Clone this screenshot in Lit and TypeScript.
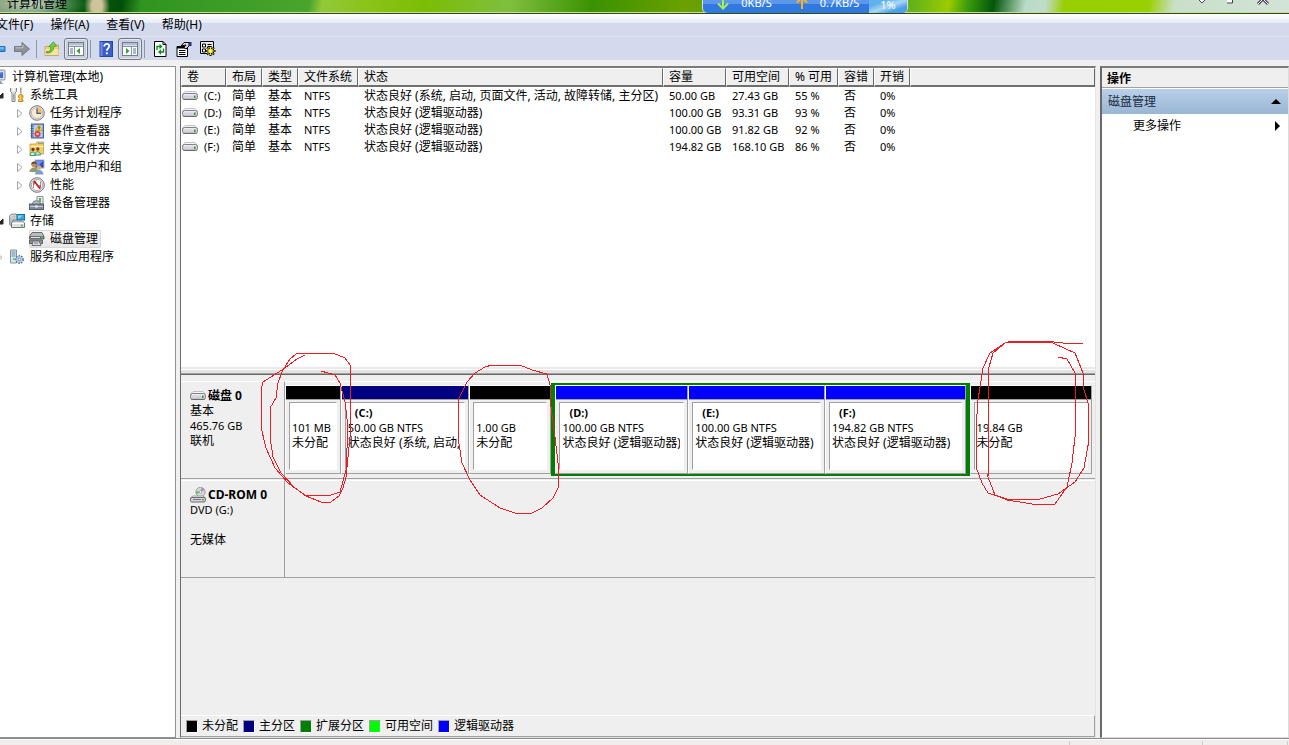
import { LitElement, html, css, svg, nothing, TemplateResult } from "lit";
import { customElement, property } from "lit/decorators.js";
import { classMap } from "lit/directives/class-map.js";
import { styleMap } from "lit/directives/style-map.js";

const uiFont = css`"Noto Sans", "Noto Sans CJK SC", sans-serif`;

/* ---------- icons, all on a 16 x 16 grid ---------- */
const glyphs: Record<string, TemplateResult> = {
  computer: svg`<rect x="1" y="1" width="13" height="10" rx="1" fill="#d9dde3" stroke="#8a93a3"/><rect x="3" y="3" width="9" height="6" fill="#3f6fd8"/><path d="M3 3h9l-9 5z" fill="#7fa5f0"/><path d="M5 12h5l2 3H4z" fill="#9aa2ae"/>`,
  tools: svg`<path d="M1.500 1v3.500L3 6v8.500h3V6l1.500-1.500V1" fill="#e4e4e4" stroke="#858585"/><path d="M4.500 0v4" stroke="#fff" stroke-width="1.600"/><path d="M4.500 7v6" stroke="#a5a5a5"/><path d="M11 .5h1.500v6H11z" fill="#999"/><path d="M9.500 9c0-2 4.500-2 4.500 0v1.500l-1 1 1 1.500v1.500H9.500V13l1-1.500-1-1z" fill="#f2b01e" stroke="#b87a08" stroke-width=".8"/><path d="M11.200 8.500v5.500" stroke="#ffe08a"/>`,
  clock: svg`<circle cx="8" cy="8" r="7.300" fill="#e2e2e2" stroke="#7b7b7b"/><circle cx="8" cy="8" r="5.600" fill="#f7ead0" stroke="#a9a9a9" stroke-width=".7"/><path d="M8 8V2.400A5.600 5.600 0 0 1 13.600 8z" fill="#f3bf6c"/><path d="M8 3.500V8.300H12" fill="none" stroke="#3b5c8c" stroke-width="1.300"/>`,
  events: svg`<rect x="2.500" y="1" width="12" height="14" fill="#7e9fd8" stroke="#44609c"/><rect x="4.500" y="2" width="9" height="12" fill="#b7cdf2"/><path d="M1.500 3h3M1.500 5.500h3M1.500 8h3M1.500 10.500h3M1.500 13h3" stroke="#56637e"/><path d="M10 1.500l3.500 6h-7z" fill="#ffd83a" stroke="#b98d00" stroke-width=".6"/><path d="M10 3.500v2.300M10 6.300v.8" stroke="#222"/><circle cx="8.500" cy="11" r="3" fill="#d93a30"/><path d="M7.300 9.800l2.400 2.400m0-2.400l-2.400 2.400" stroke="#fff"/>`,
  share: svg`<path d="M1 3h6l1-2h6.500v12H1z" fill="#f5cf6a" stroke="#c39a32" stroke-width=".8"/><path d="M9 2.500h5" stroke="#5aa8e0" stroke-width="1.200"/><path d="M1.500 5.500h13" stroke="#fff2bf"/><circle cx="4" cy="8.500" r="1.700" fill="#6b3a18"/><circle cx="8.800" cy="8" r="1.700" fill="#8c3a18"/><path d="M1 14.500c0-4.500 5.500-4.500 5.500 0z" fill="#d9e8df" stroke="#2f9a72"/><path d="M6 14c0-4.500 5.500-4.500 5.500 0z" fill="#bfe0d0" stroke="#2f9a72"/>`,
  users: svg`<rect x="6" y="1" width="9" height="8" fill="#2c4fc4" stroke="#a9b3c9"/><path d="M7 2h7L8 8z" fill="#6f93ee"/><circle cx="5" cy="5.500" r="2.700" fill="#c98f52"/><path d="M2.300 5.500c0-4 5.400-4 5.400 0-2-1.500-3.500-1.500-5.400 0z" fill="#6a4318"/><path d="M.5 13c0-6 9-6 9 0z" fill="#8aa06c"/><circle cx="10" cy="8.500" r="2.300" fill="#dba872"/><path d="M6 15.500c0-6 8.500-6 8.500 0z" fill="#7f9fc8"/>`,
  perf: svg`<circle cx="8" cy="8" r="7.300" fill="#e6e6e6" stroke="#777"/><circle cx="8" cy="8" r="5.600" fill="#fff" stroke="#9c9c9c" stroke-width=".8"/><path d="M4.500 11V6l3-2.500M11.500 4.500V10" fill="none" stroke="#777" stroke-width=".8"/><path d="M5 4l6 7.500" stroke="#c8161d" stroke-width="1.800"/><path d="M5 4.500v3M11 8v3.500" stroke="#c8161d"/>`,
  device: svg`<path d="M8 1.500h6v8H8z" fill="#e7e9ec" stroke="#8c9196"/><path d="M10 3h2v4h-2z" fill="#5eb464"/><path d="M3 9l2-3h5l2 3" fill="#b8bfc8" stroke="#747c86"/><rect x=".5" y="9" width="14" height="5.500" fill="#7f8b98" stroke="#56606b"/><path d="M1 11.500h13" stroke="#c9d0d8"/><rect x="6" y="10.500" width="3" height="2" fill="#e6e6e6"/>`,
  storage: svg`<ellipse cx="5" cy="4" rx="4.500" ry="3" fill="#d3d7db" stroke="#888"/><path d="M.5 4v7c0 2 4 2 4 2V7" fill="#b6bcc2" stroke="#888" stroke-width=".8"/><circle cx="5" cy="4" r="1" fill="#fff" stroke="#777" stroke-width=".5"/><rect x="8" y="1.500" width="7.500" height="5.500" fill="#2ea7dc" stroke="#1f6f9c"/><path d="M9 2.500h5L9 6z" fill="#8fd8f5"/><path d="M2.500 10l1.500-2h9.500l2 2v4.500h-13z" fill="#dfe2e5" stroke="#70767c"/><path d="M3 10.500h12" stroke="#fff"/><circle cx="12.800" cy="12.500" r="1.100" fill="#3fb83c"/>`,
  diskmgmt: svg`<path d="M3 1.500h10l2 4v2.500H.5V5.500z" fill="#b9bcc0" stroke="#6d7074"/><path d="M.5 5h14.500v3H.5z" fill="#6c7075"/><path d="M2 6.500h9" stroke="#e3e3e3"/><path d="M.5 9h13v3.500H.5z" fill="#8f9398" stroke="#5d6064"/><path d="M4 10h6l2 4.500H3z" fill="#dcdee0" stroke="#6d7074"/><path d="M5 12h4" stroke="#777"/><rect x="12" y="5.500" width="2" height="1.500" fill="#4ac24a"/>`,
  services: svg`<path d="M1.500 1h6v13h-6z" fill="#dbe6ec" stroke="#7d98a4"/><path d="M2.500 3h4M2.500 5h4M2.500 7h4" stroke="#6f8c99"/><circle cx="5" cy="10" r=".9" fill="#3cae3c"/><circle cx="10.500" cy="10.500" r="3.600" fill="#a9c3e2" stroke="#57779f" stroke-width="1.600" stroke-dasharray="1.500 1.100"/><circle cx="10.500" cy="10.500" r="2.900" fill="#b8cfe9"/><circle cx="10.500" cy="10.500" r="1.300" fill="#fff" stroke="#57779f" stroke-width=".7"/>`,
  back: svg`<path d="M1 5.500h14v5H1z" fill="#3f9ae0" stroke="#1f6db3"/><path d="M2 7h12" stroke="#a5d6fa"/>`,
  forward: svg`<path d="M.5 5.500h7.500v-4L15.500 8 8 14.500v-4H.5z" fill="#8f9298" stroke="#74777d" stroke-linejoin="round"/><path d="M1.500 6.800h7.500V4" fill="none" stroke="#c3c6cb"/>`,
  folderup: svg`<path d="M1 5.500h5l1.500-1.500h7v10.500H1z" fill="#f0cf7c" stroke="#c9a95c"/><path d="M1.500 8h13v6h-13z" fill="#f9e3a2"/><path d="M2.500 10.500C5.500 11 7 9 7 6L4.800 5.500 9.500.8 12.500 5l-2.700.5c0 4-2.500 7-7.300 6.500z" fill="#6fcf45" stroke="#3d9a26" stroke-width=".8"/>`,
  paneleft: svg`<rect x=".5" y="1.500" width="15" height="13" fill="#fff" stroke="#6f7f94"/><path d="M1 2h14v2.500H1z" fill="#b4c0d0"/><path d="M1 5.500h14" stroke="#8694a8"/><path d="M6.500 6v8" stroke="#8694a8"/><path d="M2 8h3M2 10h3M2 12h3" stroke="#56708f"/><path d="M12 7v6l-3.500-3z" fill="#38a32c"/>`,
  paneright: svg`<rect x=".5" y="1.500" width="15" height="13" fill="#fff" stroke="#6f7f94"/><path d="M1 2h14v2.500H1z" fill="#b4c0d0"/><path d="M1 5.500h14" stroke="#8694a8"/><path d="M9.500 6v8" stroke="#8694a8"/><path d="M11 8h3M11 10h3M11 12h3" stroke="#56708f"/><path d="M4 7v6l3.500-3z" fill="#38a32c"/>`,
  help: svg`<rect x="2" y=".5" width="12.500" height="15" fill="#3a5fcb" stroke="#2a459c"/><path d="M2.500 1h2v14h-2z" fill="#6d8ee6"/><path d="M6.200 5.500c0-3.500 5-3.200 5-.3 0 2-2.400 2.200-2.400 4.600" fill="none" stroke="#fff" stroke-width="1.800"/><rect x="7.900" y="11.300" width="1.900" height="1.900" fill="#fff"/>`,
  refresh: svg`<path d="M2.500.5h8.500l3 3v12H2.500z" fill="#fff" stroke="#000"/><path d="M11 .5v3h3" fill="none" stroke="#000"/><path d="M5 9V5.500h3" fill="none" stroke="#0a8a1a" stroke-width="1.400"/><path d="M7.500 2.800l3 2.700-3 2.700z" fill="#0a8a1a"/><path d="M11.500 7.500V11H8.500" fill="none" stroke="#0a8a1a" stroke-width="1.400"/><path d="M9 8.300L6 11l3 2.700z" fill="#0a8a1a"/>`,
  props: svg`<path d="M1 5.500h10.500v10H1z" fill="#fff" stroke="#000"/><path d="M1 6.500h10" stroke="#000" stroke-width="2"/><path d="M3 9.500h6.500M3 11.500h6.500M3 13.500h6.500" stroke="#000"/><path d="M5 5l3-3.500h5V5l-3 3-2-1.500L10 4z" fill="#d8d8d8" stroke="#000"/><path d="M13 1h2.500v4H13z" fill="#2b2b80"/>`,
  settings: svg`<path d="M.5.500h13v12H.5z" fill="#e9e9e9" stroke="#000"/><path d="M2.500 3h3v3h-3zM2.500 8h3v3h-3z" fill="#fff" stroke="#000"/><path d="M7.500 3.500h4M7.500 5.500h4" stroke="#000"/><path d="M10.500 5v10M5.500 10h10M7 6.500l7 7M14 6.500l-7 7" stroke="#000" stroke-width="2"/><path d="M10.500 6v8M6.500 10h8M7.500 7l6 6M13.500 7l-6 6" stroke="#ffe500" stroke-width="1"/><circle cx="10.500" cy="10" r="2.300" fill="#ffe500"/><circle cx="10.500" cy="10" r="1" fill="#fff"/>`,
  drive: svg`<path d="M3 3.500h10l2.500 3H.5z" fill="#f6f6f8" stroke="#b4b4ba" stroke-width=".8"/><rect x=".5" y="5.500" width="15" height="6" rx="2" fill="#d4d4da" stroke="#808088"/><path d="M2 6.800h12" stroke="#f7f7fa"/><path d="M1.500 11.300h13" stroke="#5c5c62" stroke-width=".8"/><rect x="12" y="7.500" width="1.600" height="2.500" fill="#3a9a3a"/>`,
  cdrom: svg`<circle cx="10.500" cy="5" r="4.700" fill="#d4dad8" stroke="#8f9594" stroke-width=".8"/><path d="M10.500 5l1-4.500a4.500 4.500 0 0 1 3 2.500z" fill="#c77bd0"/><path d="M10.500 5l-4 2a4.500 4.500 0 0 1-.3-3z" fill="#58c25c"/><circle cx="10.500" cy="5" r="1.300" fill="#fff" stroke="#888" stroke-width=".6"/><path d="M3 9h10l2.500 2H.5z" fill="#f1f1f3" stroke="#909096" stroke-width=".8"/><rect x=".5" y="10.500" width="15" height="4.500" rx="1.500" fill="#d4d4da" stroke="#6b6b72"/><path d="M3 12.500h8" stroke="#77777d"/><rect x="12.200" y="12" width="1.600" height="1.500" fill="#3a9a3a"/>`,
};
const icon = (name: string) =>
  html`<svg class="icon" viewBox="0 0 16 16" width="16" height="16" aria-hidden="true">${glyphs[name]}</svg>`;

/* ---------- data ---------- */
interface Node { label: string; icon: string; level: number; state?: "open" | "closed"; selected?: boolean; }
const tree: Node[] = [
  { label: "计算机管理(本地)", icon: "computer", level: 0 },
  { label: "系统工具", icon: "tools", level: 1, state: "open" },
  { label: "任务计划程序", icon: "clock", level: 2, state: "closed" },
  { label: "事件查看器", icon: "events", level: 2, state: "closed" },
  { label: "共享文件夹", icon: "share", level: 2, state: "closed" },
  { label: "本地用户和组", icon: "users", level: 2, state: "closed" },
  { label: "性能", icon: "perf", level: 2, state: "closed" },
  { label: "设备管理器", icon: "device", level: 2 },
  { label: "存储", icon: "storage", level: 1, state: "open" },
  { label: "磁盘管理", icon: "diskmgmt", level: 2, selected: true },
  { label: "服务和应用程序", icon: "services", level: 1, state: "closed" },
];

const columns = ["卷", "布局", "类型", "文件系统", "状态", "容量", "可用空间", "% 可用", "容错", "开销"];
const volumes = [
  ["(C:)", "简单", "基本", "NTFS", "状态良好 (系统, 启动, 页面文件, 活动, 故障转储, 主分区)", "50.00 GB", "27.43 GB", "55 %", "否", "0%"],
  ["(D:)", "简单", "基本", "NTFS", "状态良好 (逻辑驱动器)", "100.00 GB", "93.31 GB", "93 %", "否", "0%"],
  ["(E:)", "简单", "基本", "NTFS", "状态良好 (逻辑驱动器)", "100.00 GB", "91.82 GB", "92 %", "否", "0%"],
  ["(F:)", "简单", "基本", "NTFS", "状态良好 (逻辑驱动器)", "194.82 GB", "168.10 GB", "86 %", "否", "0%"],
];

type Kind = "free" | "primary" | "logical";
interface Part { kind: Kind; share: number; name?: string; size: string; status: string; }
const before: Part[] = [
  { kind: "free", share: 55, size: "101 MB", status: "未分配" },
  { kind: "primary", share: 129, name: "(C:)", size: "50.00 GB NTFS", status: "状态良好 (系统, 启动," },
  { kind: "free", share: 82, size: "1.00 GB", status: "未分配" },
];
const extended: Part[] = [
  { kind: "logical", share: 133, name: "(D:)", size: "100.00 GB NTFS", status: "状态良好 (逻辑驱动器)" },
  { kind: "logical", share: 137, name: "(E:)", size: "100.00 GB NTFS", status: "状态良好 (逻辑驱动器)" },
  { kind: "logical", share: 141, name: "(F:)", size: "194.82 GB NTFS", status: "状态良好 (逻辑驱动器)" },
];
const after: Part[] = [{ kind: "free", share: 123, size: "19.84 GB", status: "未分配" }];

const legend = [
  ["free", "未分配"],
  ["primary", "主分区"],
  ["extended", "扩展分区"],
  ["space", "可用空间"],
  ["logical", "逻辑驱动器"],
];

const base = css`
  * { box-sizing: border-box; }
  button { margin: 0; padding: 0; border: 0; background: none; color: inherit; font: inherit; white-space: nowrap; }
  .icon { display: block; flex: none; }
`;

/* ---------- title bar ---------- */
@customElement("title-bar")
class TitleBar extends LitElement {
  static styles = [base, css`
    :host {
      display: flex; align-items: flex-start; justify-content: space-between; position: relative;
      height: 14px; overflow: hidden; border-bottom: 1px solid #2f4a12; box-shadow: inset 0 -1px #c8dca0;
      background:
        radial-gradient(ellipse 52px 18px at 34px 4px, rgba(255,255,255,.7), rgba(255,255,255,0)),
        radial-gradient(ellipse 13px 20px at 97px 6px, #cfc39a 40%, rgba(207,195,154,0)),
        linear-gradient(100deg, #6d8f62 0, #0c5d14 5%, #044f08 9.500%, #2f9420 11%, #49a52c 24%, #93c83a 25%, #8cc41c 28%, #7bbd04 33%, #7fbf40 39.500%, #3a9200 46%, #6ba000 53%, #4ca800 68%, #67b51a 71%, #9bcc00 73.500%, #3b9c0c 75%, #04560a 77%, #b9dcc6 79.500%, #bfdccb 81%, #97cf00 82.500%, #99d000 89%, #c8dfc8 91%, #d3e4d8 100%);
    }
    .title { padding-left: 7px; line-height: 18px; margin: -5px 0 0; font-size: 12px; font-weight: 400; }
    .meter {
      position: absolute; left: 702px; top: -8px; width: 206px; height: 22px; display: flex;
      border: 1px solid #d3dcef; border-radius: 6px; color: #fff; font-size: 11px; line-height: 24px; overflow: hidden;
      background: linear-gradient(#5c97ea 0 11px, #2f79df 11px);
    }
    .rate { flex: 1; display: flex; align-items: center; justify-content: center; gap: 12px; white-space: nowrap; }
    .load { width: 38px; text-align: center; background: linear-gradient(160deg, #5fb3ec 40%, #a9d6f4 60%, #4f9fe6 80%); }
    .controls { display: flex; gap: 12px; padding-right: 18px; }
    .controls button { width: 16px; height: 14px; }
    .controls svg { display: block; }
  `];
  render() {
    return html`
      <h1 class="title">计算机管理</h1>
      <div class="controls">
        <button aria-label="最小化"><svg width="16" height="14"><path d="M-1 -1h8l-4 4z" fill="#fff" stroke="#445"/></svg></button>
        <button aria-label="最大化"><svg width="16" height="14"><path d="M-.5-4h6v7h-6z" fill="#fff" stroke="#445"/></svg></button>
        <button aria-label="关闭"><svg width="16" height="14"><path d="M3 4l5-5 5 5" fill="none" stroke="#445" stroke-width="3"/><path d="M3 4l5-5 5 5" fill="none" stroke="#fff"/></svg></button>
      </div>
      <div class="meter">
        <span class="rate"><svg width="12" height="14"><path d="M6 1v11M1 7.500l5 5 5-5" fill="none" stroke="#a8ef5c" stroke-width="2"/></svg>0KB/S</span>
        <span class="rate"><svg width="12" height="14"><path d="M6 13V2M1 6.500l5-5 5 5" fill="none" stroke="#ffb21e" stroke-width="2"/></svg>0.7KB/S</span>
        <span class="load">1%</span>
      </div>`;
  }
}

/* ---------- menu and tool bars ---------- */
@customElement("command-bars")
class CommandBars extends LitElement {
  static styles = [base, css`
    :host { display: block; background: #d3daed; }
    .menu { display: flex; gap: 17px; height: 22px; margin-left: -4px; align-items: center; font-size: 12px; }
    .sheen { background: linear-gradient(#fff, #e6ebf4 9px, #d3daed 9px); }
    .tools { display: flex; align-items: center; height: 24px; padding-top: 1px; margin-left: -14px; border-top: 1px solid #dfe5f2; }
    .tool { display: grid; place-items: center; width: 24px; height: 22px; border-radius: 3px; }
    .pressed { border: 1px solid #6f7885; background: #c9cfdc; box-shadow: inset 0 0 0 1px #e2e6ef; }
    .rule { width: 1px; height: 18px; margin: 0 3px 0 2px; background: #8f97a6; }
  `];
  private tool(name: string, label: string, pressed = false) {
    return html`<button class=${classMap({ tool: true, pressed })} aria-label=${label}>${icon(name)}</button>`;
  }
  render() {
    return html`
      <div class="sheen"><nav class="menu">
        ${["文件(F)", "操作(A)", "查看(V)", "帮助(H)"].map((m) => html`<button>${m}</button>`)}
      </nav></div>
      <div class="tools">
        ${this.tool("back", "后退")}${this.tool("forward", "前进")}
        <span class="rule"></span>
        ${this.tool("folderup", "上一级")}${this.tool("paneleft", "控制台树", true)}
        <span class="rule"></span>
        ${this.tool("help", "帮助")}${this.tool("paneright", "操作窗格", true)}
        <span class="rule"></span>
        ${this.tool("refresh", "刷新")}${this.tool("props", "属性")}${this.tool("settings", "设置")}
      </div>`;
  }
}

/* ---------- console tree ---------- */
@customElement("console-tree")
class ConsoleTree extends LitElement {
  static styles = [base, css`
    :host { display: block; overflow: hidden; background: #fff; border: 1px solid #8e919c; border-left: 0; }
    .list { list-style: none; margin: 0; padding: 1px 0 0; }
    .node { display: flex; align-items: center; height: 18px; }
    .level0 { margin-left: -21px; }
    .level1 { margin-left: -3px; }
    .level2 { margin-left: 17px; }
    .twisty { flex: none; width: 12px; height: 12px; }
    .label { display: flex; align-items: center; gap: 5px; height: 18px; padding-right: 3px; border-radius: 2px; }
    .selected { background: linear-gradient(#f8f8f8, #e5e5e5); box-shadow: 0 0 0 1px #dadada inset; }
  `];
  render() {
    return html`<ul class="list">${tree.map((n) => html`
      <li class="node level${n.level}">
        <svg class="twisty" viewBox="0 0 12 12" aria-hidden="true">
          ${n.state === "closed" ? svg`<path d="M.5 2.500v8l4.500-4z" fill="#fff" stroke="#a6a6a6"/>` : nothing}
          ${n.state === "open" ? svg`<path d="M6 4v5H1z" fill="#262626" stroke="#262626"/>` : nothing}
        </svg>
        <button class=${classMap({ label: true, selected: !!n.selected })}>${icon(n.icon)}<span>${n.label}</span></button>
      </li>`)}</ul>`;
  }
}

/* ---------- volume list ---------- */
@customElement("volume-list")
class VolumeList extends LitElement {
  static styles = [base, css`
    :host { display: block; overflow: hidden; background: #fff; }
    table { width: 100%; border-collapse: separate; border-spacing: 0; table-layout: fixed; }
    th, td { padding: 0 0 0 6px; text-align: left; font-weight: 400; white-space: nowrap; overflow: hidden; }
    th {
      height: 19px; padding-left: 5px; line-height: 16px; background: #efefef; border: solid; border-width: 1px 1px 2px;
      border-color: #fff #696969 #6f6f6f #fff;
    }
    td { height: 17px; line-height: 17px; }
    td:first-child { padding-left: 1px; }
    .c0 { width: 45px; } .c1, .c2, .c8, .c9 { width: 36px; } .c3 { width: 60px; }
    .c4 { width: 305px; } .c5, .c6 { width: 63px; } .c7 { width: 49px; }
    .latin { font-size: 11px; }
    .volume { display: flex; align-items: center; gap: 6px; }
  `];
  render() {
    const latin = new Set([0, 3, 5, 6, 7, 9]);
    return html`<table>
      <colgroup>${columns.map((_, i) => html`<col class="c${i}">`)}<col></colgroup>
      <thead><tr>${columns.map((c) => html`<th scope="col">${c}</th>`)}<th></th></tr></thead>
      <tbody>${volumes.map((row) => html`<tr>${row.map((v, i) => html`
        <td class=${classMap({ latin: latin.has(i) })}>${i ? v : html`<span class="volume">${icon("drive")}${v}</span>`}</td>`)}<td></td></tr>`)}
      </tbody></table>`;
  }
}

/* ---------- graphical disk view ---------- */
@customElement("disk-partition")
class DiskPartition extends LitElement {
  @property({ attribute: false }) part_!: Part;
  static styles = [base, css`
    :host {
      display: flex; flex-direction: column; min-width: 0; height: 89px; background: #efefef;
      border: 1px solid; border-color: #fff #a0a0a0 #a0a0a0 #fff;
    }
    .bar { height: 14px; border-bottom: 1px solid #a0a0a0; flex: none; }
    .free { background: #000; } .primary { background: #000080; } .logical { background: #00f; }
    .well {
      flex: 1; margin: 2px 3px 3px; padding: 2px 3px 0 2px; overflow: hidden; white-space: nowrap; line-height: 15px;
      background: #fff; border: 1px solid; border-color: #a0a0a0 #fff #fff #a0a0a0;
    }
    .line { height: 15px; overflow: hidden; }
    .name { font-weight: 700; font-size: 11px; padding-left: 7px; }
    .size { font-size: 11px; }
  `];
  render() {
    const p = this.part_;
    return html`<div class="bar ${p.kind}"></div>
      <div class="well">
        <div class="line name">${p.name ?? nothing}</div>
        <div class="line size">${p.size}</div>
        <div class="line">${p.status}</div>
      </div>`;
  }
}

@customElement("disk-view")
class DiskView extends LitElement {
  static styles = [base, css`
    :host { display: flex; flex-direction: column; background: #efefef; overflow: hidden; }
    .disks { flex: 1; display: flex; flex-direction: column; gap: 1px; padding-top: 6px; min-height: 0; }
    .disk { display: grid; grid-template-columns: 104px minmax(0, 1fr); height: 98px; flex: none; }
    .info, .strip { border-top: 1px solid #fff; border-bottom: 1px solid #a0a0a0; }
    .info { padding: 6px 0 0 9px; border-right: 1px solid #a0a0a0; line-height: 15px; }
    .line { height: 15px; white-space: nowrap; }
    .head { display: flex; align-items: center; gap: 2px; font-weight: 700; }
    .small { font-size: 11px; }
    .strip { display: flex; align-items: flex-start; padding: 1px 3px 0 0; }
    .outer { margin-top: 2px; }
    .extended { display: flex; min-width: 0; border: solid #008000; border-width: 2px 4px; }
    .legend { display: flex; align-items: center; gap: 5px; height: 22px; padding-left: 5px; border: solid; border-width: 1px 1px 1px 0; border-color: #fff #a0a0a0 #a0a0a0; }
    .key { display: flex; align-items: center; gap: 4px; }
    .swatch { width: 12px; height: 13px; border: 1px solid; border-color: #a0a0a0 #fff #fff #a0a0a0; }
    .free { background: #000; } .primary { background: #000080; } .ext { background: #008000; }
    .space { background: #0f0; } .logical { background: #00f; }
  `];
  private parts(list: Part[], outer: boolean) {
    return list.map((p) => html`<disk-partition class=${classMap({ outer })} .part_=${p} style=${styleMap({ flex: `${p.share} ${p.share} 0` })}></disk-partition>`);
  }
  render() {
    return html`
      <div class="disks">
        <section class="disk">
          <div class="info">
            <div class="line head">${icon("drive")}磁盘 0</div>
            <div class="line">基本</div><div class="line small">465.76 GB</div><div class="line">联机</div>
          </div>
          <div class="strip">
            ${this.parts(before, true)}
            <div class="extended" style=${styleMap({ flex: "419 419 0" })}>${this.parts(extended, false)}</div>
            ${this.parts(after, true)}
          </div>
        </section>
        <section class="disk">
          <div class="info">
            <div class="line head">${icon("cdrom")}CD-ROM 0</div>
            <div class="line small">DVD (G:)</div><div class="line"></div><div class="line">无媒体</div>
          </div>
          <div class="strip"></div>
        </section>
      </div>
      <div class="legend">${legend.map(([k, t]) => html`
        <span class="key"><span class="swatch ${k === "extended" ? "ext" : k}"></span>${t}</span>`)}</div>`;
  }
}

/* ---------- actions pane ---------- */
@customElement("actions-pane")
class ActionsPane extends LitElement {
  static styles = [base, css`
    :host { display: block; background: #fff; border: solid; border-width: 2px 1px 1px 2px; border-color: #7b7b7b #dcdcdc #dcdcdc #696969; overflow: hidden; }
    .head { height: 20px; margin: 0 0 1px; padding-left: 5px; background: #efefef; border-bottom: 1px solid #a0a0a0; font-size: 12px; font-weight: 700; line-height: 21px; }
    .row { display: flex; align-items: center; justify-content: space-between; width: 100%; height: 25px; padding: 0 7px 0 6px; }
    .band { background: linear-gradient(#b9d0e8, #9ab5d4); color: #1a2a42; }
    .more { height: 24px; padding-left: 31px; }
  `];
  render() {
    return html`
      <h2 class="head">操作</h2>
      <button class="row band">磁盘管理<svg width="10" height="10"><path d="M5 2l5 5H0z"/></svg></button>
      <button class="row more">更多操作<svg width="10" height="10"><path d="M4 0v10l5-5z"/></svg></button>`;
  }
}

/* ---------- window ---------- */
@customElement("app-root")
class AppRoot extends LitElement {
  static styles = [base, css`
    :host {
      display: flex; flex-direction: column; position: relative; height: 100vh; overflow: hidden;
      background: #f0f0f0; color: #000; font: 12px/16px ${uiFont};
    }
    .workspace { flex: 1; min-height: 0; display: grid; grid-template-columns: 176px minmax(0, 1fr) 189px; gap: 4px; padding-top: 6px; }
    .center { display: flex; flex-direction: column; min-width: 0; min-height: 0; border: solid; border-width: 2px 1px 1px 1px; border-color: #7b7b7b #e3e3e3 #e3e3e3 #696969; }
    .volumes { flex: 299 299 0; min-height: 0; }
    .splitter { height: 8px; flex: none; background: linear-gradient(#e9e9e9 2px, #fff 2px 3px, #e3e3e3 3px 6px, #a0a0a0 6px 7px, #696969 7px); }
    .graph { flex: 362 362 0; min-height: 0; }
    .status { display: flex; justify-content: flex-end; height: 7px; border-top: 1px solid #8a8a8a; background: #f1eded; box-shadow: inset 0 1px #fff; padding-right: 1px; }
    .cell { border-left: 1px solid #d0cccc; margin-top: 2px; width: 133px; }
    .end { width: 85px; }
    .tip { width: 1px; }
    .ink { position: absolute; left: 0; top: 0; pointer-events: none; fill: none; stroke: #ea1c24; stroke-width: 1; shape-rendering: crispEdges; }
  `];
  render() {
    return html`
      <title-bar></title-bar>
      <command-bars></command-bars>
      <main class="workspace">
        <console-tree></console-tree>
        <div class="center">
          <volume-list class="volumes"></volume-list>
          <div class="splitter"></div>
          <disk-view class="graph"></disk-view>
        </div>
        <actions-pane></actions-pane>
      </main>
      <footer class="status"><span class="cell"></span><span class="cell end"></span><span class="cell tip"></span></footer>
      <svg class="ink" width="1289" height="745" aria-hidden="true">
        <path d="M305 355L297 359 285 368 263 382 261 390V427L266 448 275 468 288 483 306 496 321 502H331L339 496 343 488 346 477 350 437V365L345 358 333 353H309L296 354 290 359 286 365 282 372 278 383 276 398 270 408V437L273 457 281 473 295 488 305 495 328 496 340 492 346 470 348 427 345 402 340 383 335 375 321 371"/>
        <path d="M492 365H520L532 370 547 374 550 385 551 407 555 437 558 463V488L553 498 542 508 532 513H515L500 508 480 495 470 480 462 463 458 437V400L467 382 475 373 485 367Z"/>
        <path d="M1083 343H1063L1045 341H1012L1005 343 990 353 983 368 978 400 976 428V467L982 483 988 493 1007 499H1040L1058 494 1075 482 1084 468 1089 440 1088 403 1084 390 1083 373 1075 353 1053 343 1030 342 1005 343 993 353 989 367 988 477 995 495 1007 500 1032 504H1055L1067 487 1072 463 1075 437V373L1067 359 1058 357"/>
      </svg>`;
  }
}
